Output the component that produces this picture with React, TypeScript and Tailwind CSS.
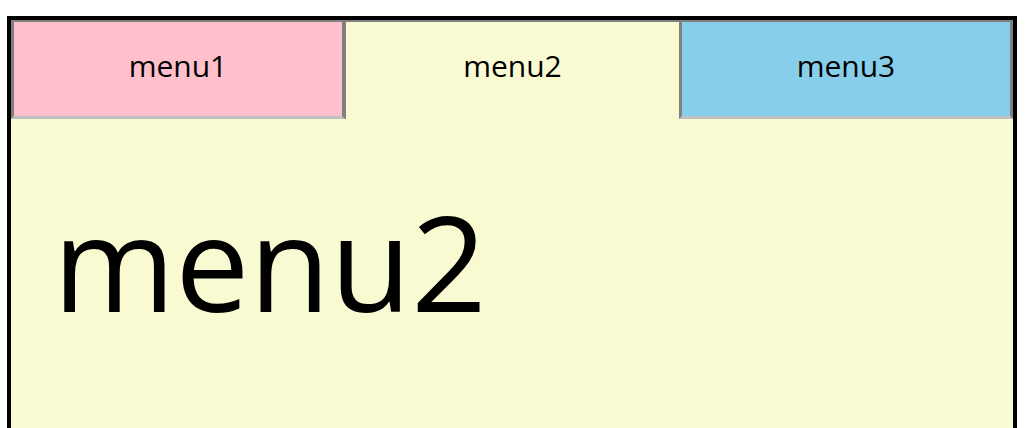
import React, { useState } from "react";

const tabs = [
  { id: "menu1", bg: "bg-[#ffc0cb]" },
  { id: "menu2", bg: "bg-[#fafad2]" },
  { id: "menu3", bg: "bg-[#87ceeb]" },
];

export default function App() {
  const [active, setActive] = useState("menu2");
  return (
    <div className="w-[1026px] h-[428px] overflow-hidden bg-white" style={{ fontFamily: "'Open Sans', 'Noto Sans', sans-serif" }}>
      <div className="ml-[7px] mt-[16px] w-[1010px] h-[520px] border-[4px] border-solid border-black bg-[#fafad2] flex flex-col">
        <div className="grid grid-cols-3 h-[99px]">
          {tabs.map((t) => {
            const isActive = t.id === active;
            return (
              <div
                key={t.id}
                onClick={() => setActive(t.id)}
                className={
                  isActive
                    ? "cursor-pointer bg-[#fafad2] border-solid border-t-[2px] border-t-[#808080] border-l-[1px] border-l-[#808080] flex items-center justify-center pb-[10px] text-[30px] text-black"
                    : `cursor-pointer ${t.bg} border-solid border-t-[2px] border-l-[3px] border-r-[3px] border-b-[3px] border-t-[#808080] border-l-[#808080] border-r-[#808080] border-b-[#c0c0c0] flex items-center justify-center pb-[7px] text-[30px] text-black`
                }
              >
                {t.id}
              </div>
            );
          })}
        </div>
        <div className="pl-[42px] pt-[76px] text-[132px] leading-none text-black">
          {active}
        </div>
      </div>
    </div>
  );
}
